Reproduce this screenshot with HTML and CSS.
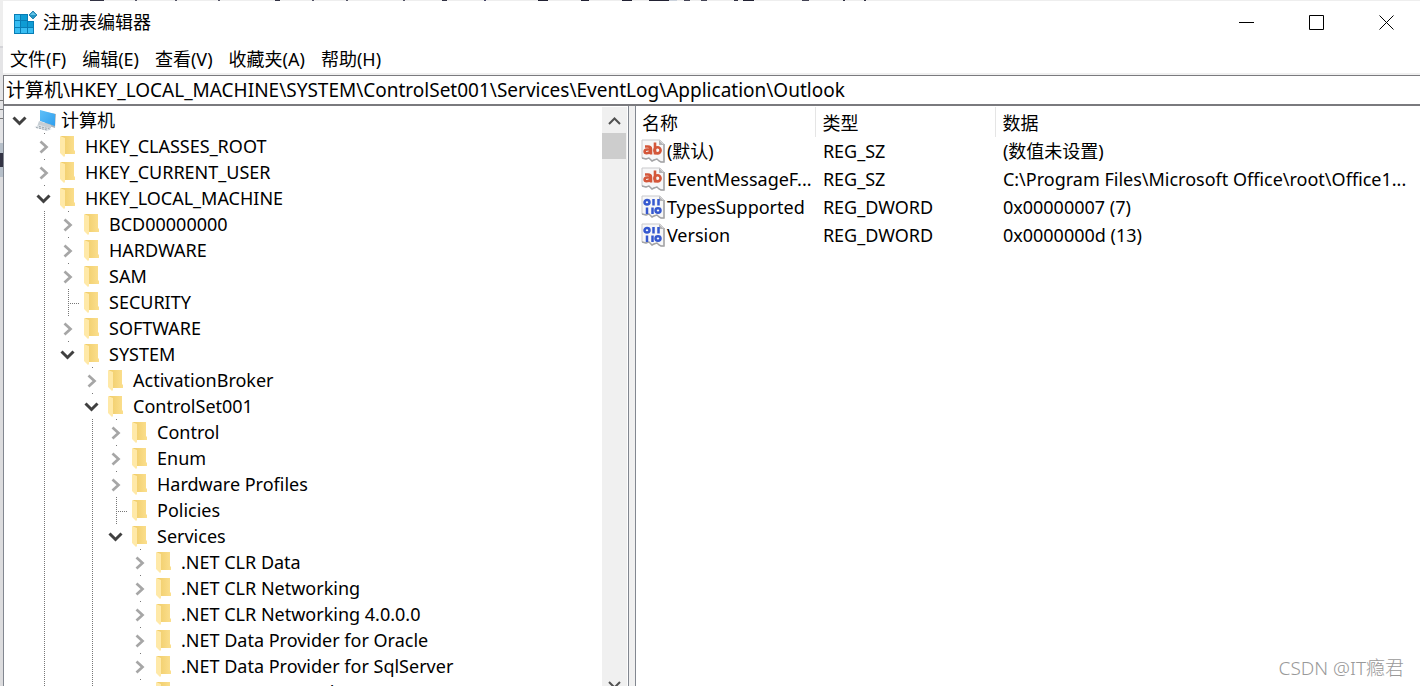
FILE: index.html
```
<!DOCTYPE html>
<html lang="zh-CN">
<head>
<meta charset="utf-8">
<title>注册表编辑器</title>
<link rel="stylesheet" href="styles.css">
</head>
<body>
<svg class="defs" aria-hidden="true">
  <defs>
    <linearGradient id="gold" x1="0" x2="1"><stop offset="0" stop-color="#f0cc68"/><stop offset="1" stop-color="#fbdf8e"/></linearGradient>
    <linearGradient id="screen" x1="0" x2="1" y2="1"><stop offset="0" stop-color="#5fc0f8"/><stop offset="1" stop-color="#2f9fee"/></linearGradient>
    <symbol id="folder" viewBox="0 0 24 24"><path d="M1 2h13v14l1 1v3H4z" fill="url(#gold)"/><path d="M0 2l5 2v18l-1 1-4-4z" fill="#ffe9a8"/></symbol>
    <symbol id="pc" viewBox="0 0 24 24"><path d="M4 3l16 3-1 14-9-3z" fill="#a9b4bb"/><path d="M4 2l15 4v12L4 13z" fill="url(#screen)"/><path d="M3 13l12 4v3l-6 1-8-2z" fill="#c6ced4"/><path d="M-2 19l6-2 12 4-5 2z" fill="#dfe4e8"/><path d="M0 19.500l11 2.500M3 18.500l11 2.500" stroke="#9ba6ae" stroke-dasharray="2 1"/></symbol>
    <symbol id="right" viewBox="0 0 16 16"><path d="M4.500 3.500l6 5.500-6 5.500" fill="none" stroke="#a6a6a6" stroke-width="2.700"/></symbol>
    <symbol id="down" viewBox="0 0 16 16"><path d="M1.500 5.500l6 6 6-6" fill="none" stroke="#404040" stroke-width="3"/></symbol>
    <symbol id="sheet" viewBox="0 0 24 24"><path d="M1 1h18l4 4v18h-3l-2-1-2-2-3 1-2 1-3-3-3 1-4-1z" fill="#f7f7f8" stroke="#c9c9cb"/><path d="M23 5v18h-3l-2-1-2-2-3 1-2 1-3-3-3 1-4-1" fill="none" stroke="#a4a4a6" stroke-width="1.500"/><path d="M18 1v5h5z" fill="#b4b4b6"/></symbol>
    <symbol id="text-value" viewBox="0 0 24 24"><use href="#sheet"/><g fill="none" stroke="#d4573a" stroke-width="2.600"><path d="M4 7.500h3q3 0 3 3V15.500M9.500 10.500H6Q3.600 10.800 3.600 12.500t2 1.700q2.500 0 4-2"/><path d="M14 3.500v12"/><circle cx="16.500" cy="11.300" r="3.100"/></g></symbol>
    <symbol id="binary-value" viewBox="0 0 24 24"><use href="#sheet"/><g fill="none" stroke="#3558cf" stroke-width="2.500"><ellipse cx="6" cy="7.200" rx="2.500" ry="2.200"/><path d="M12.500 4v6.500M17.500 4v6.500M6 12.500v6.500M11.500 12.500v6.500"/><ellipse cx="17" cy="15.500" rx="2.500" ry="2.200"/></g></symbol>
  </defs>
</svg>
<div class="desktop">
<main class="window">
  <header class="titlebar">
    <svg class="logo" viewBox="0 0 24 24" aria-hidden="true"><path d="M0 3h14v7h6v13H0z" fill="#087db5"/><g fill="#38bdf2"><path d="M1 4h5v5H1zM1 10h5v6H1zM1 17h5v5H1zM7 17h6v5H7zM14 17h5v5h-5z"/></g><g fill="#0e9cd4"><path d="M7 4h6v5H7zM14 11h5v5h-5z"/></g><path d="M7 10h6v6H7z" fill="#0e9cd4"/><path d="M19 0l4 4-4 4-4-4z" fill="#2495c4" stroke="#2b86b0"/><path d="M19 1l3 3h-6z" fill="#66c5e8"/></svg>
    <h1 class="title">注册表编辑器</h1>
    <div class="controls">
      <button class="control" aria-label="最小化"><svg viewBox="0 0 16 16"><path d="M0 7.500h15"/></svg></button>
      <button class="control" aria-label="最大化"><svg viewBox="0 0 16 16"><path d="M.5.5h14v14H.5z"/></svg></button>
      <button class="control" aria-label="关闭"><svg viewBox="0 0 16 16"><path d="M.5.5l14 14M14.500.5l-14 14"/></svg></button>
    </div>
  </header>
  <nav class="menubar">
    <button>文件(F)</button><button>编辑(E)</button><button>查看(V)</button><button>收藏夹(A)</button><button>帮助(H)</button>
  </nav>
  <input class="address" aria-label="地址" value="计算机\HKEY_LOCAL_MACHINE\SYSTEM\ControlSet001\Services\EventLog\Application\Outlook">
  <div class="panes">
    <section class="tree-pane">
      <ul class="tree" id="tree"></ul>
      <div class="scrollbar">
        <button class="scroll-button" aria-label="向上滚动"><svg viewBox="0 0 16 16"><path d="M3 12l5.500-5.500L14 12"/></svg></button>
        <div class="thumb"></div>
        <button class="scroll-button scroll-down" aria-label="向下滚动"><svg viewBox="0 0 16 16"><path d="M3 5l5.500 5.500L14 5"/></svg></button>
      </div>
    </section>
    <div class="splitter"></div>
    <section class="value-pane">
      <table class="values">
        <colgroup><col class="col-name"><col class="col-type"><col></colgroup>
        <thead><tr><th>名称</th><th>类型</th><th>数据</th></tr></thead>
        <tbody>
          <tr><td><span class="name"><svg><use href="#text-value"/></svg><span>(默认)</span></span></td><td>REG_SZ</td><td>(数值未设置)</td></tr>
          <tr><td><span class="name"><svg><use href="#text-value"/></svg><span>EventMessageF...</span></span></td><td>REG_SZ</td><td>C:\Program Files\Microsoft Office\root\Office1...</td></tr>
          <tr><td><span class="name"><svg><use href="#binary-value"/></svg><span>TypesSupported</span></span></td><td>REG_DWORD</td><td>0x00000007 (7)</td></tr>
          <tr><td><span class="name"><svg><use href="#binary-value"/></svg><span>Version</span></span></td><td>REG_DWORD</td><td>0x0000000d (13)</td></tr>
        </tbody>
      </table>
    </section>
  </div>
</main>
<p class="watermark">CSDN @IT瘾君</p>
</div>
<script src="tree.js"></script>
</body>
</html>
```
FILE: styles.css
```
* { box-sizing: border-box; }
body { margin: 0; color: #000; font: 18px/26px "Noto Sans", "Noto Sans CJK SC", sans-serif; }
button, input { margin: 0; padding: 0; border: 0; background: none; color: inherit; font: inherit; }
.defs { position: absolute; width: 0; height: 0; }
.desktop {
  position: relative; height: 100vh; overflow: hidden; padding: 1px 0 0 3px;
  background:
    linear-gradient(90deg, transparent 90px, #334 90px 104px, transparent 104px 135px, #556 135px 137px, transparent 137px 175px, #556 175px 177px, transparent 177px 218px, #556 218px 220px, transparent 220px 275px, #334 275px 280px, transparent 280px 312px, #556 312px 314px, transparent 314px 346px, #556 346px 348px, transparent 348px 403px, #556 403px 405px, transparent 405px 442px, #334 442px 447px, transparent 447px 484px, #446 484px 486px, transparent 486px 538px, #223 538px 548px, transparent 548px 581px, #223 581px 589px, transparent 589px 622px, #223 622px 632px, transparent 632px 649px, #223 649px 669px, #cbd2dc 669px 677px, transparent 677px 684px, #445 684px 690px, transparent 690px 701px, #445 701px 707px, transparent 707px 734px, #334 734px 738px, transparent 738px 743px, #223 743px 754px, transparent 754px 802px, #445 802px 809px, transparent 809px 843px, #334 843px 845px, transparent 845px 864px, #334 864px 866px, transparent 866px) 0 0 / 100% 1px no-repeat,
    linear-gradient(#eee 46px, #d4d4d8 46px 48px, #e4e4e6 48px 100px, #777 100px 101px, #e4e4e6 101px 109px, #777 109px 110px, #e4e4e6 110px 118px, #777 118px 119px, #e4e4e6 119px 143px, #b6bfc9 143px 153px, #334 153px 167px, #b6bfc9 167px 177px, #dcdcde 177px);
}
.window { display: flex; flex-direction: column; height: 100%; background: #fff; }
.titlebar { display: flex; flex: none; align-items: center; height: 43px; padding-left: 11px; }
.logo { width: 24px; height: 24px; margin-right: 5px; }
.title { flex: 1; margin: 0; padding-bottom: 2px; font-size: 18px; font-weight: 400; line-height: 24px; }
.controls { display: flex; margin-right: -2px; }
.control { width: 70px; height: 43px; display: grid; place-items: center; }
.control svg { width: 16px; height: 16px; fill: none; stroke: #000; }
.menubar { display: flex; flex: none; gap: 16px; height: 31px; padding: 2px 7px; border-bottom: 2px solid #f0f0f0; }
.address { flex: none; width: 100%; height: 31px; padding: 0 2px 2px; border: 1px solid #7a7a7e; border-bottom-width: 2px; border-right: 0; outline: 0; font-size: 19px; }
.panes { flex: 1; display: flex; min-height: 0; margin-bottom: -12px; }
.tree-pane { flex: none; width: 44.1%; display: flex; min-height: 0; border-left: 1px solid #828790; }
.tree { flex: 1; min-width: 0; height: 100%; overflow: hidden; padding-top: 1px; }
.tree, .tree ul { margin: 0; padding-left: 0; list-style: none; }
.tree ul { padding-left: 24px; }
.tree ul.through { background: repeating-linear-gradient(#777 0 1px, transparent 1px 2px) 16px 0 / 1px 100% no-repeat; }
.row { position: relative; display: flex; align-items: center; height: 26px; padding-left: 8px; white-space: nowrap; }
.row::before { content: ""; position: absolute; left: 16px; top: 0; width: 1px; height: 1px; background: #777; }
.row.root::before { display: none; }
.row.leaf::before { height: 26px; background: repeating-linear-gradient(#777 0 1px, transparent 1px 2px); }
.row.leaf::after { content: ""; position: absolute; left: 16px; top: 14px; width: 11px; height: 1px; background: repeating-linear-gradient(90deg, #777 0 1px, transparent 1px 2px); }
.toggle { display: flex; width: 16px; height: 16px; margin-right: 8px; }
.toggle svg { width: 16px; height: 16px; }
.icon { width: 24px; height: 24px; margin-right: 1px; overflow: visible; }
#pc { overflow: visible; }
.scrollbar { flex: none; width: 25px; display: flex; flex-direction: column; background: #f0f0f0; margin: 1px 1px 0 0; }
.scroll-button { height: 26px; display: grid; place-items: center; }
.scroll-button svg { width: 16px; height: 16px; fill: none; stroke: #505050; stroke-width: 2; }
.scroll-down { margin-top: auto; }
.thumb { height: 26px; margin-right: 1px; background: #cdcdcd; }
.splitter { flex: none; width: 8px; border: 1px solid #828790; border-width: 0 1px; background: #f0f0f0; }
.value-pane { flex: 1; min-width: 0; padding-top: 1px; }
.values { width: 100%; table-layout: fixed; border-collapse: collapse; }
.col-name, .col-type { width: 180px; }
.values th { height: 30px; padding: 2px 6px 0; border-right: 1px solid #e5e5e5; text-align: left; font-weight: 400; }
.values th:last-child { border-right: 0; }
.values td { height: 28px; padding: 0 0 0 7px; white-space: nowrap; }
.values td:first-child { padding-left: 5px; }
.name { display: flex; align-items: center; }
.name svg { flex: none; width: 24px; height: 24px; margin-right: 2px; }
.watermark { position: absolute; right: 16px; bottom: 5px; margin: 0; color: #999; font: 300 19px/26px "Noto Sans", "Noto Sans CJK SC", sans-serif; }
```
FILE: tree.js
```
const folder = (name, options = {}) => ({ name, ...options });
const root = {
  name: "计算机", icon: "pc", open: true, children: [
    folder("HKEY_CLASSES_ROOT"),
    folder("HKEY_CURRENT_USER"),
    folder("HKEY_LOCAL_MACHINE", { open: true, through: true, children: [
      folder("BCD00000000"), folder("HARDWARE"), folder("SAM"),
      folder("SECURITY", { leaf: true }), folder("SOFTWARE"),
      folder("SYSTEM", { open: true, children: [
        folder("ActivationBroker"),
        folder("ControlSet001", { open: true, through: true, children: [
          folder("Control"), folder("Enum"), folder("Hardware Profiles"),
          folder("Policies", { leaf: true }),
          folder("Services", { open: true, children: [
            folder(".NET CLR Data"), folder(".NET CLR Networking"),
            folder(".NET CLR Networking 4.0.0.0"),
            folder(".NET Data Provider for Oracle"),
            folder(".NET Data Provider for SqlServer"),
            folder(".NET Memory Cache 4.0")
          ] })
        ] })
      ] })
    ] })
  ]
};

function render(node, level) {
  const kind = level === 0 ? " root" : node.leaf ? " leaf" : "";
  const glyph = node.open ? "down" : "right";
  const toggle = node.leaf
    ? '<span class="toggle"></span>'
    : `<button class="toggle" aria-expanded="${!!node.open}" aria-label="${node.name}"><svg><use href="#${glyph}"/></svg></button>`;
  const children = node.children
    ? `<ul class="${node.through ? "through" : ""}">${node.children.map(child => render(child, level + 1)).join("")}</ul>`
    : "";
  return `<li><div class="row${kind}">${toggle}<svg class="icon"><use href="#${node.icon || "folder"}"/></svg><span>${node.name}</span></div>${children}</li>`;
}

document.getElementById("tree").innerHTML = render(root, 0);
```
